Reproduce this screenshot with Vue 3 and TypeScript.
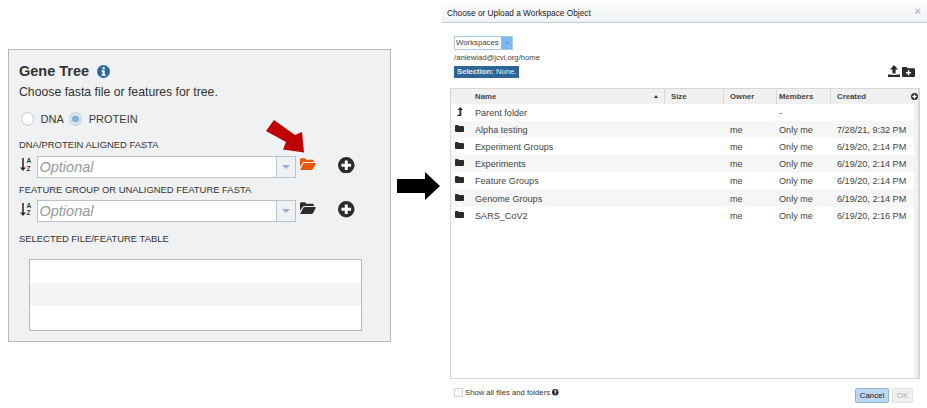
<script setup lang="ts">
interface Row { name: string; owner: string; members: string; created: string; parent?: boolean }
const rows: Row[] = [
  { name: 'Parent folder', owner: '', members: '-', created: '', parent: true },
  { name: 'Alpha testing', owner: 'me', members: 'Only me', created: '7/28/21, 9:32 PM' },
  { name: 'Experiment Groups', owner: 'me', members: 'Only me', created: '6/19/20, 2:14 PM' },
  { name: 'Experiments', owner: 'me', members: 'Only me', created: '6/19/20, 2:14 PM' },
  { name: 'Feature Groups', owner: 'me', members: 'Only me', created: '6/19/20, 2:14 PM' },
  { name: 'Genome Groups', owner: 'me', members: 'Only me', created: '6/19/20, 2:14 PM' },
  { name: 'SARS_CoV2', owner: 'me', members: 'Only me', created: '6/19/20, 2:16 PM' }
]
const fields = [
  { label: 'DNA/PROTEIN ALIGNED FASTA', active: true },
  { label: 'FEATURE GROUP OR UNALIGNED FEATURE FASTA', active: false }
]
</script>

<template>
  <div class="page">
    <section class="panel">
      <div class="title-row">
        <h1>Gene Tree</h1>
        <svg class="info" viewBox="0 0 14 14"><circle cx="7" cy="7" r="7" fill="#2d6a9a" /><rect x="5.9" y="2.4" width="2.4" height="2.2" fill="#fff" /><path d="M4.9 5.6H8.300V10.200H9.300V11.600H4.900V10.200H5.900V7H4.900Z" fill="#fff" /></svg>
      </div>
      <p class="desc">Choose fasta file or features for tree.</p>
      <div class="radios">
        <span class="radio"></span><span class="radio-label">DNA</span>
        <span class="radio on"></span><span class="radio-label">PROTEIN</span>
      </div>
      <template v-for="f in fields" :key="f.label">
        <div class="label">{{ f.label }}</div>
        <div class="field">
          <div class="sort">
            <svg viewBox="0 0 7 15" class="sort-arrow"><path d="M2.600 0H4.400V11H7L3.500 15L0 11H2.600Z" fill="#2b2b2b" /></svg>
            <div class="sort-letters"><span>A</span><span>Z</span></div>
          </div>
          <div class="combo">
            <span class="placeholder">Optional</span>
            <span class="combo-btn"><i></i></span>
          </div>
          <svg class="folder" :class="{ active: f.active }" viewBox="0 0 16 12">
            <path d="M0 1.500Q0 .2 1.300 .2H5L6.400 1.700H12.600Q13.800 1.700 13.800 2.900V4H4.600Q3.300 4 2.400 5.200L0 8.800Z" />
            <path d="M4.600 5H15.200Q16.300 5 15.700 6L13.200 10.800Q12.500 12 11.300 12H1Q-.2 12 .6 11L3.200 6Q3.700 5 4.600 5Z" />
          </svg>
          <svg class="plus" viewBox="0 0 17 17"><circle cx="8.500" cy="8.500" r="8.500" fill="#2b2b2b" /><path d="M7 3.500H10V7H13.500V10H10V13.500H7V10H3.500V7H7Z" fill="#fff" /></svg>
        </div>
      </template>
      <div class="label selected">SELECTED FILE/FEATURE TABLE</div>
      <div class="sel-table">
        <div></div><div class="alt"></div><div></div>
      </div>
      <svg class="red-arrow" viewBox="0 0 38 34"><polygon points="8,0 29,15 36,12 38,32.500 17,29.500 20,22 0,11" fill="#c00000" /></svg>
    </section>

    <svg class="big-arrow" viewBox="0 0 43 28"><polygon points="0,7 28,7 28,0 43,14 28,28 28,21 0,21" fill="#000" /></svg>

    <section class="dialog">
      <header class="dlg-head">
        <span>Choose or Upload a Workspace Object</span>
        <span class="close">×</span>
      </header>
      <div class="dlg-top">
        <div class="tools">
          <div class="select"><span>Workspaces</span><span class="select-btn"><i></i></span></div>
          <div class="path">/aniewiad@jcvi.org/home</div>
          <div class="badge"><b>Selection:</b> None.</div>
        </div>
        <div class="actions">
          <svg width="12" height="12" viewBox="0 0 12 12"><path d="M6 0L10 4.500H7.600V8.500H4.400V4.500H2Z M0 9.500H3.500V10H8.500V9.500H12V12H0Z" fill="#2b2b2b" /></svg>
          <svg width="13" height="10" viewBox="0 0 13 10"><path fill-rule="evenodd" d="M0 1Q0 0 1 0H4.500L5.800 1.200H12Q13 1.200 13 2.200V9Q13 10 12 10H1Q0 10 0 9Z M5.700 3.300V5H4V6.500H5.700V8.200H7.300V6.500H9V5H7.300V3.300Z" fill="#2b2b2b" /></svg>
        </div>
      </div>
      <div class="table">
        <div class="grid thead">
          <span></span>
          <span class="th name-th">Name<i class="caret"></i></span>
          <span class="th sep">Size</span>
          <span class="th sep">Owner</span>
          <span class="th sep tight">Members</span>
          <span class="th sep">Created</span>
        </div>
        <svg class="add-col" viewBox="0 0 10 10"><circle cx="5" cy="5" r="5" fill="#2b2b2b" /><path d="M4 2H6V4H8V6H6V8H4V6H2V4H4Z" fill="#fff" /></svg>
        <div class="tbody">
          <div v-for="r in rows" :key="r.name" class="grid row">
            <span class="ico">
              <svg v-if="r.parent" class="up" width="6" height="9" viewBox="0 0 6 9"><path d="M3.200 0L6 3H4.300V9H0L.8 7.800H2.500V3H.6Z" fill="#2b2b2b" /></svg>
              <svg v-else width="9" height="7" viewBox="0 0 9 7"><path d="M0 1Q0 0 1 0H3L4 1H8Q9 1 9 2V6Q9 7 8 7H1Q0 7 0 6Z" fill="#2b2b2b" /></svg>
            </span>
            <span class="td-name">{{ r.name }}</span>
            <span></span>
            <span class="td">{{ r.owner }}</span>
            <span class="td tight">{{ r.members }}</span>
            <span class="td">{{ r.created }}</span>
          </div>
        </div>
      </div>
      <footer class="dlg-foot">
        <label class="show"><span class="check"></span>Show all files and folders
          <svg width="6.500" height="6.500" viewBox="0 0 8 8"><circle cx="4" cy="4" r="4" fill="#2b2b2b" /><path d="M2.600 3Q2.700 1.500 4 1.500Q5.500 1.500 5.500 2.800Q5.500 3.500 4.600 4V4.800H3.500V3.600Q4.400 3.200 4.400 2.800Q4.400 2.500 4 2.500Q3.700 2.500 3.600 3Z M3.500 5.300H4.600V6.400H3.500Z" fill="#fff" /></svg>
        </label>
        <div class="btns">
          <span class="btn cancel">Cancel</span>
          <span class="btn ok">OK</span>
        </div>
      </footer>
    </section>
  </div>
</template>

<style>
html, body { margin: 0; background: #fff; overflow: hidden; }
</style>

<style scoped>
.page {
  width: 927px;
  height: 408px;
  display: flex;
  align-items: flex-start;
  font-family: "Liberation Sans", Arial, sans-serif;
  color: #333;
  overflow: hidden;
}
.panel {
  position: relative;
  box-sizing: border-box;
  width: 383px;
  height: 293px;
  margin: 49px 0 0 8px;
  padding: 11px 10px 0;
  background: #f0f1f3;
  border: 1.5px solid #b7b9bb;
  flex: none;
}
.title-row { display: flex; align-items: center; gap: 8px; height: 20px; }
h1 { margin: 0; font-size: 14.500px; line-height: 20px; font-weight: 700; color: #333; }
.info { width: 13px; height: 13px; }
.desc { margin: 3px 0 0; font-size: 12.250px; line-height: 16px; color: #333; }
.radios { display: flex; align-items: center; height: 16px; margin-top: 11px; }
.radio {
  box-sizing: border-box;
  width: 13.500px;
  height: 13.500px;
  border-radius: 50%;
  margin-left: 1.500px;
  border: 1.500px solid #c8ced4;
  background: radial-gradient(circle, #fff 45%, #e4e9ef 100%);
}
.radio.on { background: radial-gradient(circle, #7fb0d8 38%, #d4e2ee 45%, #e4e9ef 100%); margin-left: 0; }
.radio-label { font-size: 11px; margin: 0 5px 0 6.500px; color: #3a3a3a; }
.label { font-size: 9.430px; line-height: 12px; color: #333; margin-top: 12px; white-space: nowrap; }
.field + .label { margin-top: 6px; }
.label.selected { margin-top: 10.500px; }
.field { display: flex; align-items: flex-start; height: 22px; margin-top: 4.500px; }
.sort { width: 17px; display: flex; align-items: center; gap: 1px; flex: none; margin-top: 1.500px; }
.sort-arrow { width: 6px; height: 15px; margin-left: .5px; }
.sort-letters { display: flex; flex-direction: column; font-size: 6.500px; line-height: 7.500px; font-weight: 700; color: #333; }
.combo {
  box-sizing: border-box;
  width: 259px;
  height: 22px;
  margin-left: .5px;
  display: flex;
  align-items: center;
  justify-content: space-between;
  border: 1px solid #b9c2cf;
  background: #fff;
  flex: none;
}
.placeholder { font-style: italic; font-size: 14.500px; color: #9a9a9a; padding-left: 2px; }
.combo-btn {
  width: 18px;
  height: 100%;
  background: #f0f1f3;
  border-left: 1px solid #b9c2cf;
  display: flex;
  align-items: center;
  justify-content: center;
}
.combo-btn i { border: 4px solid transparent; border-top: 4px solid #97add0; border-bottom: 0; }
.folder { width: 16px; height: 12px; margin: 2px 0 0 4.500px; fill: #2b2b2b; flex: none; }
.folder.active { fill: #e8570c; }
.plus { width: 16.500px; height: 16.500px; margin: 1px 0 0 22px; flex: none; }
.sel-table {
  box-sizing: border-box;
  width: 333px;
  height: 72px;
  margin: 14px 0 0 10px;
  border: 1.500px solid #b7b9bb;
  background: #fff;
  display: grid;
  grid-template-rows: 1fr 1fr 1fr;
}
.sel-table .alt { background: #f5f5f5; }
.red-arrow { position: absolute; left: 256.500px; top: 69.500px; width: 38px; height: 34px; }
.big-arrow { width: 43px; height: 28px; margin: 172px 0 0 6px; flex: none; }
.dialog {
  box-sizing: border-box;
  width: 485px;
  height: 404px;
  margin: 4px 0 0 2px;
  display: flex;
  flex-direction: column;
  flex: none;
}
.dlg-head {
  height: 19px;
  box-sizing: border-box;
  display: flex;
  justify-content: space-between;
  align-items: center;
  padding: 0 6px 0 5px;
  font-size: 8.300px;
  color: #222;
  background: linear-gradient(#fbfbfc, #eff1f4);
  border-bottom: 1px solid #b8cde0;
}
.close { color: #b5bcc4; font-size: 11px; font-weight: 700; margin-top: -5px; }
.dlg-top { display: flex; justify-content: space-between; align-items: flex-end; padding: 13px 12px 0 12px; }
.select {
  box-sizing: border-box;
  width: 59px;
  height: 14px;
  display: flex;
  justify-content: space-between;
  border: 1px solid #a8cbee;
  font-size: 7.800px;
  line-height: 12px;
  padding-left: 1px;
  color: #444;
}
.select-btn { width: 11px; background: #7db8f0; display: flex; align-items: center; justify-content: center; }
.select-btn i { border: 2.500px solid transparent; border-top: 2.500px solid #5c8fc4; border-bottom: 0; }
.path { font-size: 7.700px; line-height: 10px; margin-top: 3px; color: #444; }
.badge {
  width: 65px;
  box-sizing: border-box;
  height: 12px;
  margin-top: 3px;
  padding-left: 3px;
  background: #2f6496;
  color: #e8eef4;
  font-size: 7.700px;
  line-height: 12px;
  white-space: nowrap;
}
.actions { display: flex; gap: 2px; align-items: flex-end; margin-bottom: 1px; }
.table {
  position: relative;
  box-sizing: border-box;
  width: 470px;
  height: 291px;
  margin: 10px 0 0 8px;
  border: 1px solid #d5d7d9;
  border-right: 2px solid #d5d7d9;
  display: flex;
  flex-direction: column;
}
.grid { display: grid; grid-template-columns: 24px 189px 59px 53px 54px 1fr; align-items: center; }
.thead { height: 14.500px; background: #f0f0f0; flex: none; }
.th { font-size: 7.800px; font-weight: 700; color: #444; height: 100%; line-height: 16px; white-space: nowrap; }
.name-th { position: relative; }
.caret { position: absolute; right: 6px; top: 6px; border: 2.500px solid transparent; border-bottom: 3px solid #333; border-top: 0; }
.sep { border-left: 1px solid #d9d9d9; padding-left: 6px; }
.sep.tight { padding-left: 2px; }
.add-col { position: absolute; right: 0; top: 4px; width: 7px; height: 7px; }
.tbody { flex: 1; background: #fff; border-right: 4px solid #f1f2f3; }
.row { box-sizing: border-box; height: 17.200px; padding-top: 1px; font-size: 9.100px; color: #444; }
.row:nth-child(even) { background: #f6f6f6; }
.ico { display: flex; align-items: center; padding-left: 4px; margin-top: -3px; }
.up { margin-left: 2px; margin-top: 1px; }
.td-name { white-space: nowrap; }
.td { padding-left: 7px; white-space: nowrap; }
.td.tight { padding-left: 3px; }
.dlg-foot { display: flex; justify-content: space-between; padding: 9px 14px 0 12px; }
.show { display: flex; align-items: center; gap: 2px; height: 9px; font-size: 7.700px; color: #333; white-space: nowrap; }
.check { box-sizing: border-box; width: 9px; height: 9px; border: 1px solid #ccd2d8; background: #f6f8fa; }
.btns { display: flex; gap: 3px; }
.btn { box-sizing: border-box; height: 15px; font-size: 7.800px; line-height: 13px; text-align: center; border-radius: 2px; }
.cancel { width: 34px; background: #b9d6f2; border: 1px solid #8fb3d4; color: #222; }
.ok { width: 21px; background: #f0f0f0; border: 1px solid #e0e0e0; color: #aaa; }
</style>
